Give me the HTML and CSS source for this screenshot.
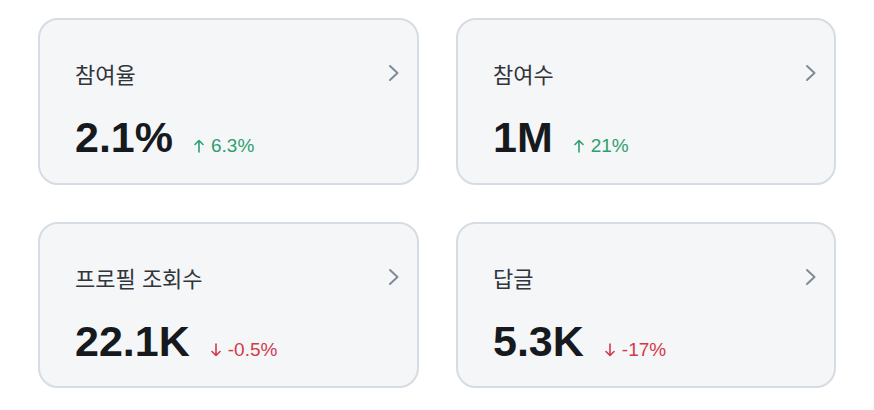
FILE: index.html
```html
<!DOCTYPE html>
<html lang="ko">
<head>
<meta charset="utf-8">
<link rel="stylesheet" href="styles.css">
</head>
<body>
<div class="grid">
  <div class="card">
    <div class="head"><span class="title">참여율</span><svg class="chev" viewBox="0 0 12 18"><path d="M2 2l7.5 7L2 16"/></svg></div>
    <div class="row"><span class="value">2.1%</span><span class="delta up"><svg class="arrow" viewBox="0 0 10 14"><path d="M5 13V1.5M1 5.5l4-4 4 4"/></svg>6.3%</span></div>
  </div>
  <div class="card">
    <div class="head"><span class="title">참여수</span><svg class="chev" viewBox="0 0 12 18"><path d="M2 2l7.5 7L2 16"/></svg></div>
    <div class="row"><span class="value">1M</span><span class="delta up"><svg class="arrow" viewBox="0 0 10 14"><path d="M5 13V1.5M1 5.5l4-4 4 4"/></svg>21%</span></div>
  </div>
  <div class="card">
    <div class="head"><span class="title">프로필 조회수</span><svg class="chev" viewBox="0 0 12 18"><path d="M2 2l7.5 7L2 16"/></svg></div>
    <div class="row"><span class="value">22.1K</span><span class="delta down"><svg class="arrow" viewBox="0 0 10 14"><path d="M5 1v11.5M1 8.5l4 4 4-4"/></svg>-0.5%</span></div>
  </div>
  <div class="card">
    <div class="head"><span class="title">답글</span><svg class="chev" viewBox="0 0 12 18"><path d="M2 2l7.5 7L2 16"/></svg></div>
    <div class="row"><span class="value">5.3K</span><span class="delta down"><svg class="arrow" viewBox="0 0 10 14"><path d="M5 1v11.5M1 8.5l4 4 4-4"/></svg>-17%</span></div>
  </div>
</div>
</body>
</html>
```
FILE: styles.css
```css
html, body {
  margin: 0;
  padding: 0;
  background: #ffffff;
}
body {
  font-family: "Liberation Sans", "Noto Sans CJK KR", sans-serif;
}
.grid {
  display: grid;
  grid-template-columns: 381px 380px;
  grid-template-rows: 167px 166px;
  column-gap: 37px;
  row-gap: 37px;
  padding: 18px 0 0 38px;
}
.card {
  box-sizing: border-box;
  background: #f5f6f7;
  border: 2px solid #d6dce3;
  border-radius: 20px;
  padding: 40px 17px 0 35px;
}
.head {
  display: flex;
  align-items: center;
  justify-content: space-between;
  height: 26px;
}
.title {
  font-family: "Noto Sans CJK KR", sans-serif;
  font-size: 22px;
  line-height: 26px;
  color: #30353b;
}
.chev {
  width: 12px;
  height: 18px;
  fill: none;
  stroke: #7f8b98;
  stroke-width: 2;
  stroke-linecap: round;
  stroke-linejoin: round;
}
.row {
  display: flex;
  align-items: baseline;
  gap: 21px;
  margin-top: 30px;
}
.value {
  font-size: 43px;
  line-height: 42px;
  font-weight: 700;
  color: #16191d;
}
.delta {
  font-size: 19px;
}
.arrow {
  width: 10px;
  height: 14px;
  margin-right: 7px;
  fill: none;
  stroke: currentColor;
  stroke-width: 1.6;
  stroke-linecap: round;
  stroke-linejoin: round;
  vertical-align: -1px;
}
.up { color: #2f9f6f; }
.down { color: #d23a4c; }
```
